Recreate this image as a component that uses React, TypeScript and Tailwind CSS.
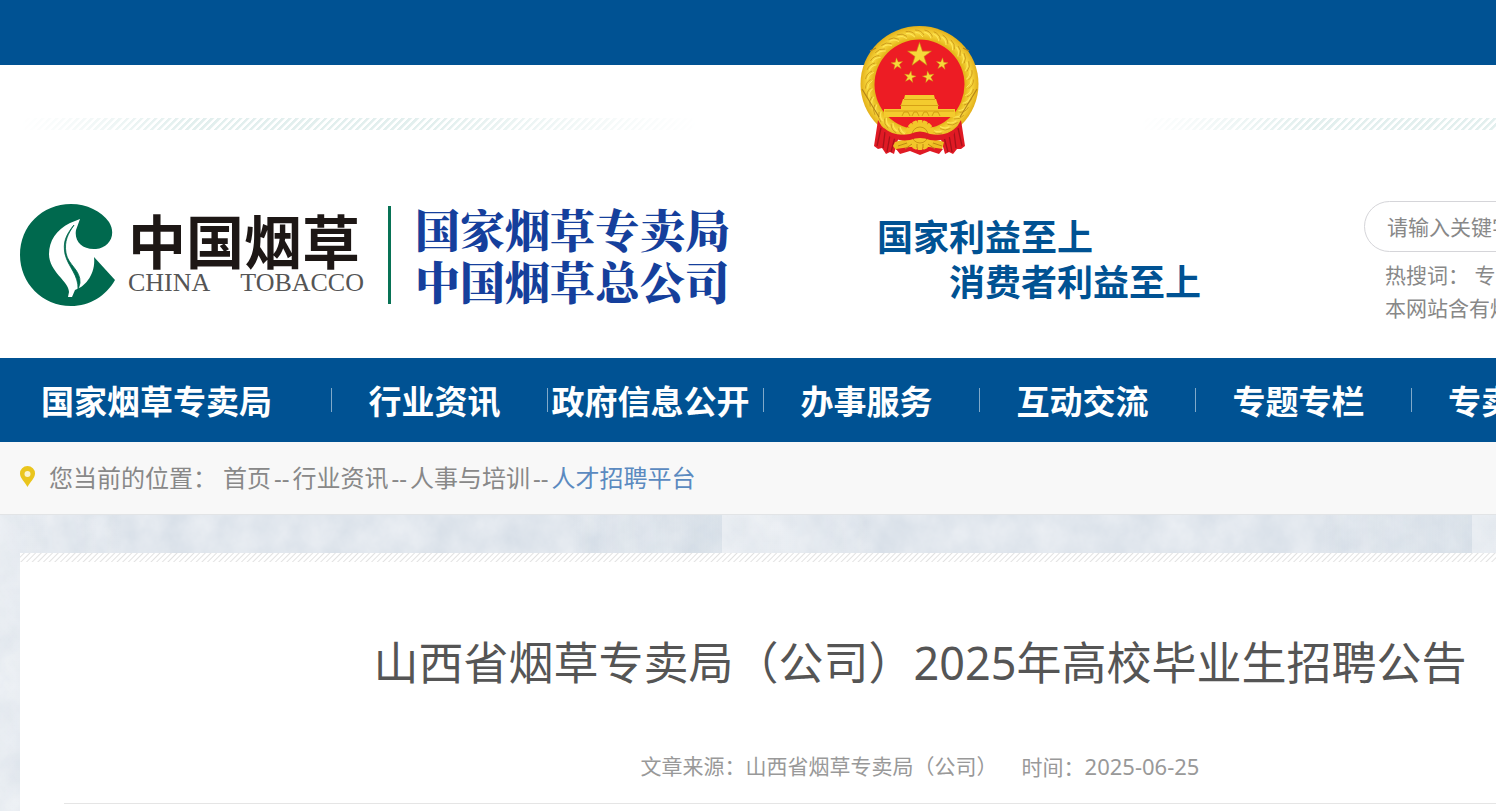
const NAV_ITEMS = ["行业资讯", "政府信息公开", "办事服务", "互动交流", "专题专栏"];

const CRUMBS = ["首页", "行业资讯", "人事与培训"];

const STAR = "0,-10 2.3,-3.1 9.5,-3.1 3.6,1.2 5.9,8.1 0,3.8 -5.9,8.1 -3.6,1.2 -9.5,-3.1 -2.3,-3.1";

const SMALL_STARS = [
  { x: 47, y: 49, r: -6 },
  { x: 92, y: 49, r: 6 },
  { x: 60, y: 62, r: 10 },
  { x: 78.5, y: 62, r: -10 },
];

const GRAINS = Array.from({ length: 36 }, (_, i) => i * 10);
const TEETH = Array.from({ length: 16 }, (_, i) => i * 22.5);

function Emblem() {
  return (
    <svg viewBox="0 0 140 150" className="h-[150px] w-[140px]" role="img" aria-label="国徽">
      <defs>
        <radialGradient id="gold" cx="50%" cy="50%" r="50%">
          <stop offset="78%" stopColor="#e5b71c" />
          <stop offset="88%" stopColor="#f7d63c" />
          <stop offset="100%" stopColor="#e3b01a" />
        </radialGradient>
      </defs>
      <ellipse cx="69.500" cy="69" rx="59" ry="58" fill="url(#gold)" />
      {GRAINS.map((a) => (
        <g key={a} transform={`rotate(${a} 69.5 69)`}>
          <path d="M65 15q6 0 9 5" stroke="#c9961a" strokeWidth="0.800" fill="none" />
          <path d="M65 17q5 0 8 5" stroke="#ffe65a" strokeWidth="1" fill="none" />
        </g>
      ))}
      <path d="M20 36l6-3M12 74l17 28M127 74l-17 28M119 36l-6-3" stroke="#b5851a" strokeWidth="1.200" fill="none" />
      <circle cx="69.500" cy="69.500" r="45" fill="#ed1c24" />
      <polygon points={STAR} transform="translate(69.500 40) scale(1.250)" fill="#f7d83a" stroke="#c99312" strokeWidth="0.500" />
      {SMALL_STARS.map((s) => (
        <polygon key={s.x} points={STAR} transform={`translate(${s.x} ${s.y}) rotate(${s.r}) scale(.62)`} fill="#f7d83a" stroke="#c99312" strokeWidth="0.600" />
      ))}
      {/* gate tower */}
      <path d="M55 80h29l1 4H54ZM53 84h33l2 6H51ZM51 90h37v4H51ZM34 94h71v8H34Z" fill="#f4cb2e" />
      <path d="M54 84.500h31M50 90.500h39M35 96h69" stroke="#d39c14" strokeWidth="0.900" />
      <path d="M52 101l2-4h4l2 4M62 101l2-4h3l2 4M72 101l2-4h3l2 4M82 101l2-4h4l2 4" stroke="#c8920e" strokeWidth="0.800" fill="none" />
      {/* drapery */}
      <path d="M28 105Q33 117 49 121L44 139L40 137L36 139L32 133L28 134L24 131ZM111 105Q106 117 90 121L95 139L99 137L103 139L107 134L111 134L115 131Z" fill="#e01a24" />
      <path d="M31 113l-4 18M35 117l-2 16M40 120l-3 17M45 122l-4 15M108 113l4 18M104 117l2 16M99 120l3 17M94 122l4 15" stroke="#a8121a" strokeWidth="1.300" />
      {/* lower wheat and gear */}
      <path d="M45 127Q70 119 94 127L92 135L46 135L43 131Z" fill="#eebd22" />
      <path d="M46 134L60 132H79L93 134L89 139L80 136L70 140L60 136L50 139Z" fill="#e01a24" />
      {TEETH.map((a) => (
        <rect key={a} x="67.500" y="105" width="5" height="5" rx="1" transform={`rotate(${a} 70 120)`} fill="#f2c72a" />
      ))}
      <circle cx="70" cy="120" r="12.500" fill="#f2c72a" />
      <circle cx="70" cy="120" r="8" fill="none" stroke="#c18a10" strokeWidth="0.800" />
      <path d="M34 113Q44 122 60 119Q70 114 80 119Q96 122 106 113L104 119Q94 127 80 125Q70 121 60 125Q46 127 36 119Z" fill="#e01a24" />
      <path d="M48 131l9-3M55 134l7-5M92 131l-9-3M85 134l-7-5M67 129v4M73 129v4" stroke="#b98410" strokeWidth="0.900" />
    </svg>
  );
}

function TobaccoMark() {
  return (
    <svg viewBox="0 0 96 104" className="h-[104px] w-[96px] shrink-0" aria-hidden="true">
      <path d="M74 54L95 77C86 93 70 103 51 103C22 103 0 80 0 52C0 23 22 1 51 1C67 1 81 8 89 19C97 32 89 45 76 46C62 47 54 38 56 27L60 16L50 20C36 27 29 38 29 51C29 69 49 78 49 89L48 94L52 94L55 87C65 84 76 71 74 54Z" fill="#00694e" />
      <path d="M54 22C45 33 43 40 45 51C48 64 59 72 58 87L60 80C61 67 48 62 46 50C44 38 48 31 54 22Z" fill="#00694e" stroke="#00694e" strokeWidth="0.800" />
    </svg>
  );
}

function Logo() {
  return (
    <a href="#" className="flex items-center">
      <TobaccoMark />
      <span className="ml-3 flex w-[236px] flex-col pb-1">
        <span className="font-['Noto_Sans_CJK_SC',sans-serif] text-[58px] leading-[56px] font-bold whitespace-nowrap text-[#1d1715]">中国烟草</span>
        <span className="flex justify-between pt-1 font-['Liberation_Serif',serif] text-[26px] leading-6 text-[#555]">
          <span>CHINA</span>
          <span>TOBACCO</span>
        </span>
      </span>
      <span className="mx-6 h-[98px] w-[3px] bg-[#087255]" />
      <span className="flex flex-col font-['Noto_Serif_CJK_SC','Noto_Sans_CJK_SC',serif] text-[45px] leading-[52px] font-black whitespace-nowrap text-[#153f9c]">
        <span>国家烟草专卖局</span>
        <span>中国烟草总公司</span>
      </span>
    </a>
  );
}

function Texture() {
  return (
    <svg className="absolute inset-0 h-full w-full" aria-hidden="true">
      <defs>
        <filter id="stone" x="0" y="0" width="100%" height="100%" colorInterpolationFilters="sRGB">
          <feTurbulence type="fractalNoise" baseFrequency="0.031 0.027" numOctaves="5" seed="21" />
          <feColorMatrix values=".1 0 0 0 .83  .08 0 0 0 .863  .06 0 0 0 .9  0 0 0 0 1" />
        </filter>
        <linearGradient id="shade">
          <stop offset="0" stopColor="#fff" stopOpacity=".3" />
          <stop offset=".2" stopColor="#fff" stopOpacity="0" />
          <stop offset=".8" stopColor="#c2d0db" stopOpacity="0" />
          <stop offset="1" stopColor="#c2d0db" stopOpacity=".2" />
        </linearGradient>
        <pattern id="tile" x="-28" width="750" height="600" patternUnits="userSpaceOnUse">
          <rect width="750" height="600" fill="url(#shade)" />
        </pattern>
      </defs>
      <rect width="100%" height="100%" filter="url(#stone)" />
      <rect width="100%" height="100%" fill="url(#tile)" />
    </svg>
  );
}

function Hatch() {
  return (
    <div className="h-3 w-[680px] bg-[repeating-linear-gradient(135deg,#e2efee_0px,#e2efee_2px,#ffffff_3px,#ffffff_5px)] [mask-image:linear-gradient(90deg,transparent,#000_25%,#000_60%,transparent)]" />
  );
}

export default function App() {
  return (
    <div className="min-h-screen overflow-hidden bg-white font-['Noto_Sans','Noto_Sans_CJK_SC',sans-serif]">
      <div className="flex min-h-screen min-w-[1840px] flex-col">
        <header className="relative h-[358px]">
          <div className="h-[65px] bg-[#005293]" />
          <div className="absolute inset-x-0 top-[15px] flex justify-center">
            <Emblem />
          </div>
          <div className="flex justify-between px-5 pt-[53px]">
            <Hatch />
            <Hatch />
          </div>
          <div className="flex items-start px-5 pt-[71px]">
            <div className="w-[857px] pt-[2px]">
              <Logo />
            </div>
            <p className="w-[487px] pt-[14px] text-[36px] leading-[45px] font-bold text-[#005293]">
              国家利益至上
              <br />
              <span className="pl-[72px]">消费者利益至上</span>
            </p>
            <form className="flex-1 text-[21px] text-[#888]">
              <input
                type="search"
                aria-label="关键字"
                placeholder="请输入关键字"
                className="h-[51px] w-full rounded-full border border-[#d5d5d9] px-[22px] outline-none placeholder:text-[#888]"
              />
              <p className="pt-[7px] pl-[21px] leading-[33px]">
                热搜词： <a href="#">专</a>
                <br />
                本网站含有烟
              </p>
            </form>
          </div>
        </header>

        <nav className="flex h-[84px] items-center bg-[#005293] pl-5 text-[33px] font-bold whitespace-nowrap text-white">
          <a href="#" className="w-[311px] pt-1 pl-[21px]">国家烟草专卖局</a>
          {NAV_ITEMS.map((item) => (
            <div key={item} className="flex w-[216px] items-center">
              <span className="h-6 w-px bg-[#80a9c9]" />
              <a href="#" className="flex flex-1 justify-center pt-1 pr-[10px]">{item}</a>
            </div>
          ))}
          <span className="h-6 w-px bg-[#80a9c9]" />
          <a href="#" className="pt-1 pl-9">专卖</a>
        </nav>

        <div className="flex h-[73px] items-center border-b border-[#e2e4e6] bg-[#f8f8f8] px-5 text-[24px] text-[#888]">
          <svg viewBox="0 0 15 21" className="mr-[14px] mb-1 h-[21px] w-[15px]" aria-hidden="true">
            <path d="M7.500 0a7.500 7.500 0 0 1 7.500 7.700C15 12 10 16 7.500 21C5 16 0 12 0 7.700A7.500 7.500 0 0 1 7.500 0Z" fill="#eac51d" />
            <circle cx="7.500" cy="8" r="3" fill="#fbf3cf" />
          </svg>
          <span className="mr-[6px]">您当前的位置：</span>
          {CRUMBS.map((crumb) => (
            <span key={crumb}>
              <a href="#">{crumb}</a>
              <span className="px-[3px]">--</span>
            </span>
          ))}
          <a href="#" className="text-[#5b8ac0]">人才招聘平台</a>
        </div>

        <main className="relative flex-1 px-5 pt-[38px]">
          <Texture />
          <article className="relative min-h-[258px] bg-white px-[44px] text-center">
            <div className="-mx-[44px] h-[9px] bg-[repeating-linear-gradient(135deg,#ffffff_0px,#ffffff_2px,#e2e2e2_3px,#ffffff_4px)]" />
            <h1 className="pt-[68px] text-[45px] leading-[66px] text-[#555]">
              山西省烟草专卖局（公司）2025年高校毕业生招聘公告
            </h1>
            <div className="flex justify-center gap-6 border-b border-[#e5e5e5] pt-[54px] pb-5 text-[21px] leading-8 text-[#999]">
              <span>文章来源：山西省烟草专卖局（公司）</span>
              <span>
                时间：<time className="text-[22px]">2025-06-25</time>
              </span>
            </div>
          </article>
        </main>
      </div>
    </div>
  );
}
